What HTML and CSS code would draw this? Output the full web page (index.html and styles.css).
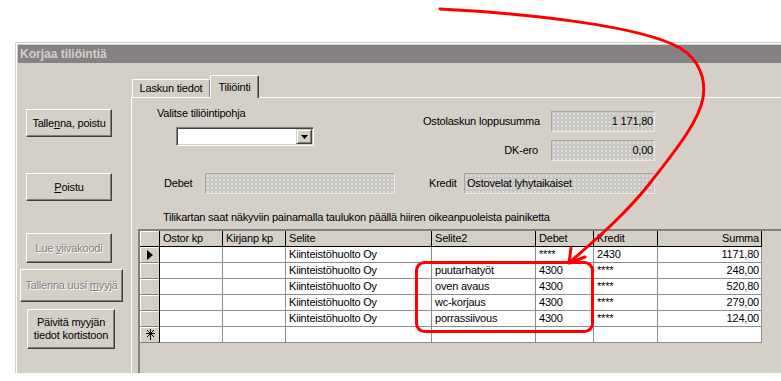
FILE: index.html
```html
<!DOCTYPE html>
<html lang="fi">
<head>
<meta charset="utf-8">
<title>Korjaa tiliöintiä</title>
<link rel="stylesheet" href="styles.css">
</head>
<body>
<div class="window">
  <div class="titlebar">Korjaa tiliöintiä</div>
  <div class="client">
    <div class="sidebar">
      <button class="btn btn-save">Talle<u>n</u>na, poistu</button>
      <button class="btn btn-exit"><u>P</u>oistu</button>
      <button class="btn btn-barcode" disabled>Lue <u>v</u>iivakoodi</button>
      <button class="btn btn-newseller" disabled>Tallenna uusi <u>m</u>yyjä</button>
      <button class="btn btn-update">Päivitä myyjän<br>tiedot kortistoon</button>
    </div>
    <div class="tabctl">
      <div class="tabstrip">
        <div class="tab">Laskun tiedot</div>
        <div class="tab tab-active">Tiliöinti</div>
      </div>
      <div class="panel">
        <div class="top">
          <div class="template">
            <div class="label">Valitse tiliöintipohja</div>
            <div class="combo">
              <div class="combo-btn"><svg width="7" height="4" viewBox="0 0 7 4"><polygon points="0,0 7,0 3.5,4" fill="#000"/></svg></div>
            </div>
          </div>
          <div class="totals">
            <div class="label right">Ostolaskun loppusumma</div><div class="field num">1 171,80</div>
            <div class="label right">DK-ero</div><div class="field num">0,00</div>
          </div>
        </div>
        <div class="accounts">
          <div class="label lbl-debet">Debet</div><div class="field f-debet"></div>
          <div class="label lbl-kredit">Kredit</div><div class="field f-kredit">Ostovelat lyhytaikaiset</div>
        </div>
        <div class="note">Tilikartan saat näkyviin painamalla taulukon päällä hiiren oikeanpuoleista painiketta</div>
        <div class="grid">
          <div class="row head">
            <div class="sel"></div><div>Ostor kp</div><div>Kirjanp kp</div><div>Selite</div><div>Selite2</div><div>Debet</div><div>Kredit</div><div class="r">Summa</div>
          </div>
          <div class="row">
            <div class="sel"><svg class="cur" width="6" height="10" viewBox="0 0 6 10"><polygon points="0,0 6,5 0,10" fill="#000"/></svg></div><div></div><div></div><div>Kiinteistöhuolto Oy</div><div></div><div>****</div><div>2430</div><div class="r">1171,80</div>
          </div>
          <div class="row">
            <div class="sel"></div><div></div><div></div><div>Kiinteistöhuolto Oy</div><div>puutarhatyöt</div><div>4300</div><div>****</div><div class="r">248,00</div>
          </div>
          <div class="row">
            <div class="sel"></div><div></div><div></div><div>Kiinteistöhuolto Oy</div><div>oven avaus</div><div>4300</div><div>****</div><div class="r">520,80</div>
          </div>
          <div class="row">
            <div class="sel"></div><div></div><div></div><div>Kiinteistöhuolto Oy</div><div>wc-korjaus</div><div>4300</div><div>****</div><div class="r">279,00</div>
          </div>
          <div class="row">
            <div class="sel"></div><div></div><div></div><div>Kiinteistöhuolto Oy</div><div>porrassiivous</div><div>4300</div><div>****</div><div class="r">124,00</div>
          </div>
          <div class="row">
            <div class="sel"><svg class="star" width="9" height="11" viewBox="0 0 9 11"><g stroke="#000" stroke-width="1"><line x1="4.5" y1="0" x2="4.5" y2="11"/><line x1="0" y1="4.5" x2="9" y2="4.5"/><line x1="1" y1="1" x2="8" y2="8"/><line x1="8" y1="1" x2="1" y2="8"/></g></svg></div><div></div><div></div><div></div><div></div><div></div><div></div><div></div>
          </div>
        </div>
      </div>
    </div>
  </div>
</div>
<svg class="annot" width="781" height="381" viewBox="0 0 781 381">
  <g fill="none" stroke="#ff0000" stroke-width="3" stroke-linejoin="round" stroke-linecap="round">
    <path d="M440,9 C520,13 640,25 680,48 C700,60 706,80 703,98 C699,120 680,145 650,183 C625,215 595,240 570,262"/>
    <polyline points="571,248 569,263 585,257"/>
    <rect x="416.5" y="262.5" width="176" height="69" rx="8" ry="8"/>
  </g>
</svg>
</body>
</html>
```

FILE: styles.css
```css
* { box-sizing: border-box; }
html, body { margin: 0; padding: 0; background: #fff; }
body {
  font-family: "Liberation Sans", Arial, sans-serif;
  font-size: 11px;
  letter-spacing: -0.2px;
  color: #000;
  width: 781px;
  height: 381px;
  overflow: hidden;
  position: relative;
}
.window {
  margin: 42px 0 0 15px;
  width: 766px;
  height: 331px;
  border-top: 1px solid #d4d0c8;
  border-left: 1px solid #d4d0c8;
  padding: 2px 0 0 2px;
  background: #d4d0c8;
  box-shadow: inset 1px 1px #fff;
  display: flex;
  flex-direction: column;
  overflow: hidden;
}
.titlebar {
  height: 18px;
  flex: none;
  background: #848284;
  color: #d4d0c8;
  font-weight: bold;
  font-size: 12px;
  letter-spacing: 0;
  line-height: 18px;
  padding-left: 2px;
}
.client { display: flex; height: 310px; flex: none; }
.sidebar {
  width: 113px;
  flex: none;
  display: flex;
  flex-direction: column;
  align-items: flex-start;
  padding-left: 8px;
}
.btn {
  font: inherit;
  letter-spacing: inherit;
  color: #000;
  background: #d4d0c8;
  border: 1px solid;
  border-color: #fff #404040 #404040 #fff;
  box-shadow: inset -1px -1px #808080;
  padding: 0;
  width: 86px;
  height: 28px;
  line-height: 13px;
  text-align: center;
  white-space: nowrap;
}
.btn-save { margin-top: 46px; }
.btn-exit { margin-top: 36px; }
.btn-barcode { margin-top: 32px; height: 30px; }
.btn-newseller { margin-top: 6px; height: 33px; width: 103px; margin-left: -6px; }
.btn-update { margin-top: 7px; height: 40px; width: 88px; margin-left: 1px; }
.btn:disabled { color: #808080; text-shadow: 1px 1px 0 #fff; }

.tabctl { flex: 1; display: flex; flex-direction: column; min-width: 0; }
.tabstrip {
  height: 34px;
  flex: none;
  display: flex;
  align-items: flex-end;
  padding-left: 1px;
  position: relative;
  z-index: 1;
}
.tab {
  height: 18px;
  width: 78px;
  border-top: 1px solid #fff;
  border-left: 1px solid #fff;
  border-right: 1px solid #808080;
  border-radius: 2px 2px 0 0;
  text-align: center;
  line-height: 13px;
  padding-top: 2px;
  background: #d4d0c8;
}
.tab-active {
  width: 49px;
  height: 23px;
  margin-bottom: -1px;
  border-right: 1px solid #404040;
  box-shadow: inset -1px 0 #808080;
  padding-top: 5px;
}
.panel {
  flex: 1;
  border-top: 1px solid #fff;
  border-left: 1px solid #fff;
  display: flex;
  flex-direction: column;
  min-height: 0;
  overflow: hidden;
}
.label { line-height: 13px; white-space: nowrap; }
.right { text-align: right; }
.top {
  display: flex;
  align-items: flex-start;
  padding-left: 25px;
  height: 63px;
  flex: none;
}
.template { width: 157px; flex: none; margin-top: 9px; }
.combo {
  margin-top: 7px;
  margin-left: 19px;
  width: 138px;
  height: 19px;
  display: flex;
  justify-content: flex-end;
  align-items: center;
  background: #fff;
  border: 1px solid;
  border-color: #808080 #fff #fff #808080;
  box-shadow: inset 1px 1px #404040, inset -1px -1px #d4d0c8;
  padding: 1px;
}
.combo-btn {
  width: 16px;
  height: 15px;
  background: #d4d0c8;
  border: 1px solid;
  border-color: #d4d0c8 #404040 #404040 #d4d0c8;
  box-shadow: inset 1px 1px #fff, inset -1px -1px #808080;
  display: flex;
  align-items: center;
  justify-content: center;
}
.combo-btn svg { display: block; }
.totals {
  margin-left: 109px;
  margin-top: 13px;
  display: grid;
  grid-template-columns: 115px 104px;
  column-gap: 13px;
  row-gap: 8px;
  align-items: center;
}
.field {
  height: 21px;
  border: 1px solid;
  border-color: #a8a6a2 #eceae6 #eceae6 #a8a6a2;
  background-color: #c9c7c3;
  background-image: radial-gradient(circle, #dedcd8 0.7px, transparent 0.9px);
  background-size: 4px 4px;
  line-height: 19px;
  padding: 0 2px;
  white-space: nowrap;
  overflow: hidden;
}
.num { text-align: right; padding-right: 1px; }
.accounts {
  display: flex;
  align-items: center;
  margin-top: 12px;
  padding-left: 32px;
  flex: none;
}
.lbl-debet { width: 41px; }
.f-debet { width: 190px; }
.lbl-kredit { width: 35px; margin-left: 34px; }
.f-kredit { width: 191px; }
.note {
  margin-top: 17px;
  padding-left: 31px;
  line-height: 13px;
  white-space: nowrap;
  flex: none;
}
.grid {
  margin-top: 5px;
  margin-left: 6px;
  flex: 1;
  border-top: 2px solid #808080;
  border-left: 2px solid #808080;
  background: #d4d0c8;
}
.row {
  display: grid;
  grid-template-columns: 20px 63px 63px 146px 104px 58px 64px 104px;
  height: 16px;
}
.row > div {
  border-right: 1px solid #8c8c8c;
  border-bottom: 1px solid #8c8c8c;
  background: #fff;
  padding: 0 3px;
  line-height: 15px;
  white-space: nowrap;
  overflow: hidden;
}
.row > .sel {
  background: #d4d0c8;
  border-right-color: #000;
  border-bottom-color: #808080;
  box-shadow: inset 1px 1px #fff;
  padding: 0;
  display: flex;
  align-items: center;
  justify-content: center;
}
.head > div {
  background: #d4d0c8;
  border-right-color: #000;
  border-bottom-color: #000;
}
.head > .sel { border-bottom-color: #000; }
.row > .r { text-align: right; padding-right: 2px; }
.cur { display: block; margin-left: 1px; }
.star { display: block; margin-left: 1px; }
.annot {
  position: absolute;
  top: 0;
  left: 0;
  pointer-events: none;
}
```
